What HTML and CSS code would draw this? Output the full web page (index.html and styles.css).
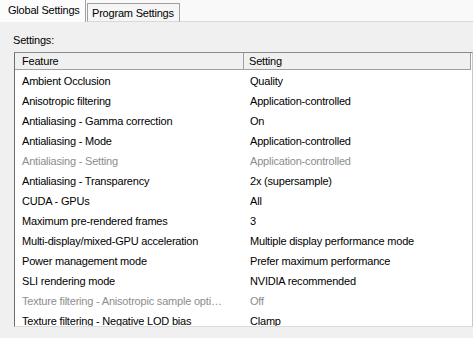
FILE: index.html
```html
<!DOCTYPE html>
<html>
<head>
<meta charset="utf-8">
<link rel="stylesheet" href="styles.css">
</head>
<body>
<div class="tabs">
  <div class="tab active">Global Settings</div>
  <div class="tab">Program Settings</div>
  <div class="tab-fill"></div>
</div>
<div class="panel">
  <div class="label">Settings:</div>
  <div class="list">
    <div class="header">
      <div class="hcell c1">Feature</div>
      <div class="hcell c2">Setting</div>
    </div>
    <div class="rows">
      <div class="row"><span class="c1">Ambient Occlusion</span><span class="c2">Quality</span></div>
      <div class="row"><span class="c1">Anisotropic filtering</span><span class="c2">Application-controlled</span></div>
      <div class="row"><span class="c1">Antialiasing - Gamma correction</span><span class="c2">On</span></div>
      <div class="row"><span class="c1">Antialiasing - Mode</span><span class="c2">Application-controlled</span></div>
      <div class="row disabled"><span class="c1">Antialiasing - Setting</span><span class="c2">Application-controlled</span></div>
      <div class="row"><span class="c1">Antialiasing - Transparency</span><span class="c2">2x (supersample)</span></div>
      <div class="row"><span class="c1">CUDA - GPUs</span><span class="c2">All</span></div>
      <div class="row"><span class="c1">Maximum pre-rendered frames</span><span class="c2">3</span></div>
      <div class="row"><span class="c1">Multi-display/mixed-GPU acceleration</span><span class="c2">Multiple display performance mode</span></div>
      <div class="row"><span class="c1">Power management mode</span><span class="c2">Prefer maximum performance</span></div>
      <div class="row"><span class="c1">SLI rendering mode</span><span class="c2">NVIDIA recommended</span></div>
      <div class="row disabled"><span class="c1">Texture filtering - Anisotropic sample opti…</span><span class="c2">Off</span></div>
      <div class="row"><span class="c1">Texture filtering - Negative LOD bias</span><span class="c2">Clamp</span></div>
    </div>
  </div>
</div>
</body>
</html>
```
FILE: styles.css
```css
html, body {
  margin: 0;
  padding: 0;
}
body {
  width: 473px;
  height: 338px;
  overflow: hidden;
  background: #f0f0f0;
  font-family: "Liberation Sans", Arial, sans-serif;
  font-size: 11px;
  letter-spacing: -0.2px;
  color: #000;
}
.tabs {
  display: flex;
  align-items: flex-end;
  height: 22px;
  background: #f9f9f9;
}
.tab {
  box-sizing: border-box;
  height: 19px;
  padding: 0 5px 0 4px;
  line-height: 18px;
  border: 1px solid #a0a0a0;
  border-bottom: 1px solid #d9d9d9;
  background: #f6f6f6;
  margin-left: 1px;
}
.tab.active {
  height: 22px;
  width: 86px;
  margin-left: 0;
  padding: 0 0 0 8px;
  line-height: 20px;
  border: none;
  border-right: 1px solid #a0a0a0;
  background: #fcfcfc;
}
.tab-fill {
  flex: 1;
  height: 1px;
  background: #d9d9d9;
}
.panel {
  padding: 0 0 0 14px;
}
.label {
  box-sizing: border-box;
  height: 30px;
  padding-top: 12px;
  margin-left: -1px;
  line-height: 13px;
}
.list {
  box-sizing: border-box;
  height: 275px;
  background: #fff;
  border-left: 1px solid #6d6d6d;
  border-top: 1px solid #8a8a8a;
  border-right: 1px solid #c8c8c8;
  border-bottom: 1px solid #dcdcdc;
  overflow: hidden;
}
.header {
  display: flex;
  height: 17px;
  box-sizing: border-box;
  border-bottom: 1px solid #a0a0a0;
  background: #f0f0f0;
  width: 456px;
}
.hcell {
  line-height: 16px;
  box-sizing: border-box;
}
.hcell.c1 {
  width: 229px;
  padding-left: 7px;
  border-right: 1px solid #a0a0a0;
}
.hcell.c2 {
  flex: 1;
  padding-left: 5px;
  border-right: 1px solid #a0a0a0;
}
.rows {
  padding-top: 1px;
}
.row {
  display: flex;
  height: 20px;
  line-height: 20px;
}
.row .c1 {
  width: 228px;
  padding-left: 7px;
  box-sizing: border-box;
  white-space: nowrap;
  overflow: hidden;
}
.row .c2 {
  padding-left: 7px;
  white-space: nowrap;
}
.row.disabled {
  color: #8d8d8d;
}
```
